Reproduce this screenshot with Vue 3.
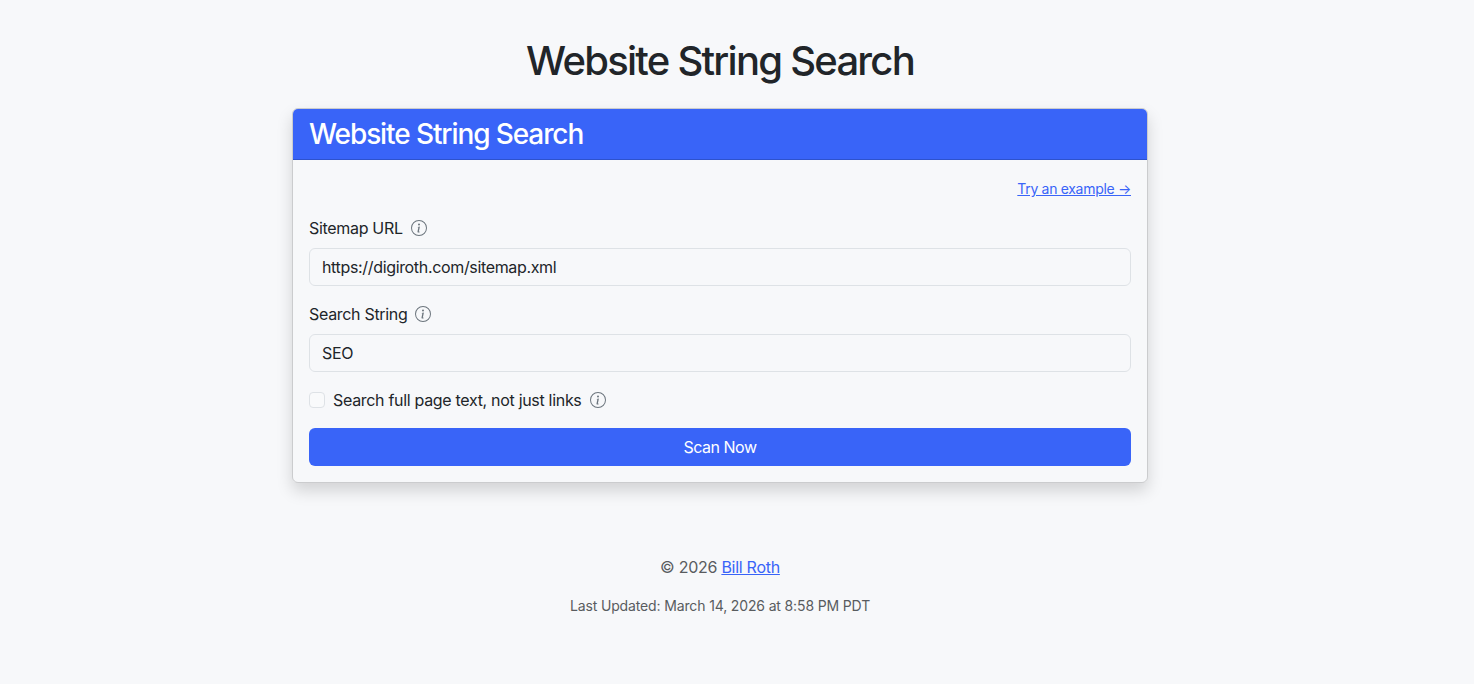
<script setup>
const fields = [
  { label: 'Sitemap URL', value: 'https://digiroth.com/sitemap.xml' },
  { label: 'Search String', value: 'SEO' },
]
</script>

<template>
  <div class="page">
    <h1 class="title">Website String Search</h1>
    <section class="card">
      <header class="card-head">Website String Search</header>
      <div class="card-body">
        <div class="example-row"><a href="#" class="example">Try an example →</a></div>
        <div v-for="f in fields" :key="f.label" class="field">
          <label class="label">{{ f.label }}
            <svg class="info" viewBox="0 0 16 16" width="16" height="16" fill="currentColor"><path d="M8 15A7 7 0 1 1 8 1a7 7 0 0 1 0 14m0 1A8 8 0 1 0 8 0a8 8 0 0 0 0 16"/><path d="m8.93 6.588-2.29.287-.082.38.45.083c.294.07.352.176.288.469l-.738 3.468c-.194.897.105 1.319.808 1.319.545 0 1.178-.252 1.465-.598l.088-.416c-.2.176-.492.246-.686.246-.275 0-.375-.193-.304-.533zM9 4.5a1 1 0 1 1-2 0 1 1 0 0 1 2 0"/></svg>
          </label>
          <input class="input" type="text" :value="f.value" />
        </div>
        <div class="check-row">
          <input type="checkbox" class="check" />
          <span>Search full page text, not just links</span>
          <svg class="info" viewBox="0 0 16 16" width="16" height="16" fill="currentColor"><path d="M8 15A7 7 0 1 1 8 1a7 7 0 0 1 0 14m0 1A8 8 0 1 0 8 0a8 8 0 0 0 0 16"/><path d="m8.93 6.588-2.29.287-.082.38.45.083c.294.07.352.176.288.469l-.738 3.468c-.194.897.105 1.319.808 1.319.545 0 1.178-.252 1.465-.598l.088-.416c-.2.176-.492.246-.686.246-.275 0-.375-.193-.304-.533zM9 4.5a1 1 0 1 1-2 0 1 1 0 0 1 2 0"/></svg>
        </div>
        <button class="scan" type="button">Scan Now</button>
      </div>
    </section>
    <footer class="foot">
      <p class="copy">© 2026 <a href="#">Bill Roth</a></p>
      <p class="updated">Last Updated: March 14, 2026 at 8:58 PM PDT</p>
    </footer>
  </div>
</template>

<style>
html, body { margin: 0; background: #f7f8fa; }
</style>

<style scoped>
.page {
  min-height: 684px;
  box-sizing: border-box;
  background: #f7f8fa;
  font-family: Inter, "Liberation Sans", sans-serif;
  color: #212529;
  padding-top: 37px;
  padding-left: 292px;
  padding-right: 326px;
  letter-spacing: -0.31px;
}
.title {
  margin: 0 0 23px;
  text-align: center;
  font-size: 40px;
  font-weight: 500;
  line-height: 48px;
  letter-spacing: -1.75px;
}
.card {
  border: 1px solid rgba(0,0,0,.175);
  border-radius: 6px;
  box-shadow: 0 8px 16px rgba(0,0,0,.15);
  overflow: hidden;
}
.card-head {
  background: #3964f8;
  color: #fff;
  font-size: 28px;
  font-weight: 500;
  line-height: 34px;
  padding: 8px 16px;
  border-bottom: 1px solid rgba(0,0,0,.175);
  letter-spacing: -1.1px;
}
.card-body { padding: 16px; }
.example-row { text-align: right; margin-bottom: 16px; line-height: 24px; height: 24px; }
.example { font-size: 14px; color: #3964f8; }
.field { margin-bottom: 16px; }
.label {
  display: flex;
  align-items: center;
  gap: 8px;
  font-size: 16px;
  line-height: 24px;
  margin-bottom: 8px;
}
.info { color: #6c757d; flex: none; }
.input {
  display: block;
  width: 100%;
  box-sizing: border-box;
  height: 38px;
  padding: 6px 12px;
  border: 1px solid #dee2e6;
  border-radius: 6px;
  background: #f7f8fa;
  font: inherit;
  font-size: 16px;
  letter-spacing: -0.34px;
  color: #212529;
  outline: none;
}
.check-row {
  display: flex;
  align-items: center;
  gap: 8px;
  font-size: 16px;
  line-height: 24px;
  margin-bottom: 16px;
}
.check {
  appearance: none;
  width: 16px;
  height: 16px;
  margin: 0;
  border: 1px solid #dee2e6;
  border-radius: 4px;
  background: #f9fafb;
}
.scan {
  display: block;
  width: 100%;
  height: 38px;
  border: 0;
  border-radius: 6px;
  background: #3964f8;
  color: #fff;
  font: inherit;
  font-size: 16px;
  letter-spacing: -0.5px;
}
.foot { text-align: center; margin-top: 72px; color: #595c5f; }
.copy { margin: 0 0 16px; font-size: 16px; line-height: 24px; letter-spacing: -0.27px; }
.copy a { color: #3964f8; }
.updated { margin: 0; font-size: 14px; line-height: 21px; letter-spacing: -0.14px; }
</style>
